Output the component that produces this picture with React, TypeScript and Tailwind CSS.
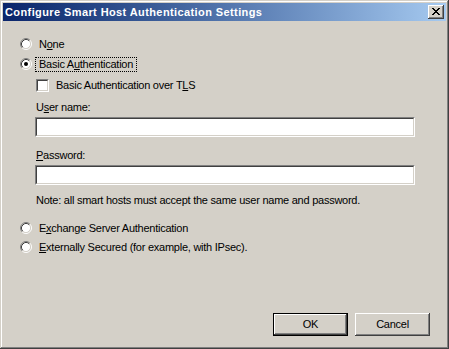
import React from "react";

const font = { fontFamily: '"Liberation Sans", Arial, sans-serif' };

const closeGlyph = [
  "XX....XX",
  ".XX..XX.",
  "..XXXX..",
  "...XX...",
  "..XXXX..",
  ".XX..XX.",
  "XX....XX",
];

function CloseButton() {
  return (
    <div className="w-[16px] h-[14px] bg-[#d4d0c8] shadow-[inset_-1px_-1px_#404040,inset_1px_1px_#ffffff,inset_-2px_-2px_#808080] flex items-center justify-center">
      <svg width="8" height="7" viewBox="0 0 8 7" shapeRendering="crispEdges" className="ml-[-1px] mt-[-1px]">
        {closeGlyph.flatMap((row, y) =>
          row.split("").map((c, x) => (c === "X" ? <rect key={`${x}-${y}`} x={x} y={y} width="1" height="1" fill="#000" /> : null))
        )}
      </svg>
    </div>
  );
}

function Radio({ checked }: { checked?: boolean }) {
  return (
    <svg width="12" height="12" viewBox="0 0 12 12" className="shrink-0 mt-px">
      <circle cx="6" cy="6" r="4.5" fill="#fff" />
      <path d="M2.11 9.89 A5.5 5.5 0 0 1 9.89 2.11" stroke="#808080" fill="none" />
      <path d="M9.89 2.11 A5.5 5.5 0 0 1 2.11 9.89" stroke="#ffffff" fill="none" />
      <path d="M2.82 9.18 A4.5 4.5 0 0 1 9.18 2.82" stroke="#404040" fill="none" />
      <path d="M9.18 2.82 A4.5 4.5 0 0 1 2.82 9.18" stroke="#d4d0c8" fill="none" />
      {checked && <circle cx="6" cy="6" r="2" fill="#000" />}
    </svg>
  );
}

function Sunken({ className, children }: { className?: string; children?: React.ReactNode }) {
  return (
    <div className={`border-t border-l border-t-[#808080] border-l-[#808080] border-b border-r border-b-white border-r-white ${className ?? ""}`}>
      <div className="w-full h-full bg-white border-t border-l border-t-[#404040] border-l-[#404040] border-b border-r border-b-[#d4d0c8] border-r-[#d4d0c8]">
        {children}
      </div>
    </div>
  );
}

function RadioRow({ checked, focused, children }: { checked?: boolean; focused?: boolean; children: React.ReactNode }) {
  return (
    <div className="flex items-start h-[15px]">
      <Radio checked={checked} />
      <span
        className={`ml-[3px] px-[3px] leading-[13px] border ${focused ? "border-dotted border-black" : "border-transparent"}`}
      >
        {children}
      </span>
    </div>
  );
}

function Button({ children, isDefault }: { children: React.ReactNode; isDefault?: boolean }) {
  return (
    <div className={`w-[75px] h-[23px] ${isDefault ? "border border-black" : ""}`}>
      <div className="w-full h-full bg-[#d4d0c8] shadow-[inset_-1px_-1px_#404040,inset_1px_1px_#ffffff,inset_-2px_-2px_#808080] flex items-center justify-center leading-[13px]">
        {children}
      </div>
    </div>
  );
}

export default function App() {
  return (
    <div
      className="w-[449px] h-[349px] bg-[#d4d0c8] p-[3px] text-[11px] tracking-[-0.25px] text-black shadow-[inset_-1px_-1px_#404040,inset_1px_1px_#d4d0c8,inset_-2px_-2px_#808080,inset_2px_2px_#ffffff] flex flex-col select-none"
      style={font}
    >
      <div className="h-[18px] bg-linear-to-r from-[#0a246a] to-[#a6caf0] flex items-center justify-between pl-[2px] pr-[2px]">
        <span className="text-white font-bold leading-[13px] tracking-[0.4px]">Configure Smart Host Authentication Settings</span>
        <CloseButton />
      </div>

      <div className="flex flex-col pl-[17px]">
        <div className="mt-[16px]">
          <RadioRow>
            N<u>o</u>ne
          </RadioRow>
        </div>
        <div className="mt-[5px]">
          <RadioRow checked focused>
            Basic A<u>u</u>thentication
          </RadioRow>
        </div>

        <div className="flex flex-col pl-[15px]">
          <div className="mt-[6px] flex items-start h-[15px] pl-px">
            <Sunken className="w-[13px] h-[13px] mt-px shrink-0" />
            <span className="ml-[3px] px-[3px] leading-[13px] border border-transparent">
              Basic Authentication over T<u>L</u>S
            </span>
          </div>

          <div className="mt-[8px] leading-[13px] pl-px">
            U<u>s</u>er name:
          </div>
          <Sunken className="mt-[3px] w-[380px] h-[20px]" />

          <div className="mt-[12px] leading-[13px] pl-px">
            <u>P</u>assword:
          </div>
          <Sunken className="mt-[3px] w-[380px] h-[20px]" />

          <div className="mt-[9px] leading-[13px] pl-px">
            Note: all smart hosts must accept the same user name and password.
          </div>
        </div>

        <div className="mt-[14px]">
          <RadioRow>
            E<u>x</u>change Server Authentication
          </RadioRow>
        </div>
        <div className="mt-[4px]">
          <RadioRow>
            <u>E</u>xternally Secured (for example, with IPsec).
          </RadioRow>
        </div>
      </div>

      <div className="mt-[58px] flex justify-end gap-[7px] pr-[16px]">
        <Button isDefault>OK</Button>
        <Button>Cancel</Button>
      </div>
    </div>
  );
}
